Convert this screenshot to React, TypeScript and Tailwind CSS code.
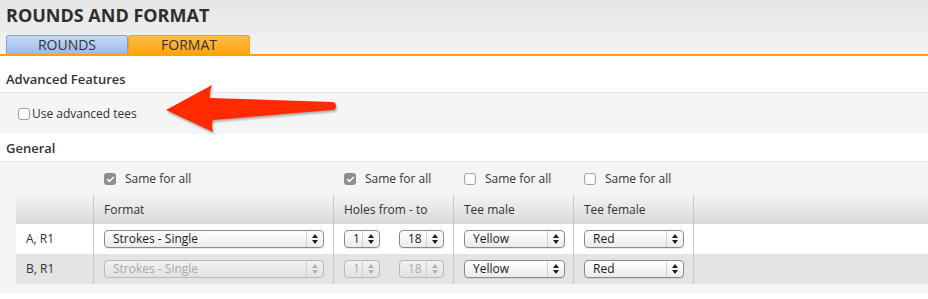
import { Check } from 'lucide-react';

const cols = 'grid grid-cols-[78px_240px_120px_120px_120px_1fr]';

function Arrows({ disabled }: { disabled?: boolean }) {
  return (
    <svg width="6" height="10" viewBox="0 0 6 10" className={disabled ? 'fill-[#b0b0b0]' : 'fill-[#1e1e1e]'}>
      <polygon points="0,4 3,0 6,4" />
      <polygon points="0,6 3,10 6,6" />
    </svg>
  );
}

function Select({ value, width, disabled }: { value: string; width: string; disabled?: boolean }) {
  return (
    <div
      className={`flex h-[18px] items-stretch rounded-[4px] border ${width} ${
        disabled
          ? 'border-[#b9b9b9] bg-gradient-to-b from-[#f2f2f2] to-[#e2e2e2] text-[#a9a9a9]'
          : 'border-[#8a8a8a] bg-gradient-to-b from-white to-[#ebebeb] text-[#1b1b1b] shadow-[0_1px_0_rgba(0,0,0,0.08)]'
      }`}
    >
      <span className="flex flex-1 items-center pl-[8px] text-[12px] leading-none">{value}</span>
      <span
        className={`flex w-[17px] items-center justify-center border-l ${
          disabled ? 'border-[#d2d2d2]' : 'border-[#d0d0d0]'
        }`}
      >
        <Arrows disabled={disabled} />
      </span>
    </div>
  );
}

function CheckBox({ checked }: { checked?: boolean }) {
  return checked ? (
    <span className="flex h-[12px] w-[12px] items-center justify-center rounded-[3px] bg-[#8d8d8d]">
      <Check className="h-[9px] w-[9px] text-white" strokeWidth={4} />
    </span>
  ) : (
    <span className="h-[12px] w-[12px] rounded-[3px] border border-[#a0a0a0] bg-white" />
  );
}

function SameForAll({ checked }: { checked?: boolean }) {
  return (
    <div className="flex items-center gap-[9px] pl-[10px] text-[12px] text-[#333]">
      <CheckBox checked={checked} />
      <span>Same for all</span>
    </div>
  );
}

const rows = [
  { label: 'A, R1', disabled: false, bg: 'bg-white' },
  { label: 'B, R1', disabled: true, bg: 'bg-[#e4e4e4]' },
];

export default function App() {
  return (
    <div className="relative h-[299px] w-[928px] overflow-hidden bg-white font-['Open_Sans',sans-serif] text-[#333]">
      {/* header + tabs */}
      <div className="h-[56px] border-b-2 border-[#ffa200] bg-gradient-to-b from-[#e5e5e5] to-[#f3f3f3] px-[6px]">
        <h1 className="pt-[1px] text-[18px] font-bold leading-[28px] text-[#2e2e2e]">
          ROUNDS AND FORMAT
        </h1>
        <div className="mt-[6px] flex">
          <div className="flex h-[19px] w-[122px] items-center justify-center rounded-t-[3px] border border-b-0 border-[#7fa3dc] bg-gradient-to-b from-[#c9dbf6] to-[#9bb8e9] text-[14px] leading-none text-[#333]">
            ROUNDS
          </div>
          <div className="flex h-[19px] w-[122px] items-center justify-center rounded-t-[3px] border border-b-0 border-[#f3a10f] bg-gradient-to-b from-[#ffbd45] to-[#ffa400] text-[14px] leading-none text-[#333]">
            FORMAT
          </div>
        </div>
      </div>

      {/* advanced features */}
      <div className="flex h-[36px] items-end px-[6px] pb-[4px] text-[13px] font-semibold leading-[18px] text-[#333]">
        Advanced Features
      </div>
      <div className="flex h-[42px] items-center gap-[2px] border-t border-[#e6e6e6] bg-[#f5f5f5] pl-[18px] text-[12px] text-[#333]">
        <CheckBox />
        <span>Use advanced tees</span>
      </div>

      {/* general */}
      <div className="flex h-[27px] items-end px-[6px] pb-[4px] text-[13px] font-semibold leading-[18px] text-[#333]">
        General
      </div>
      <div className="h-[133px] border-t border-[#e6e6e6] bg-[#f5f5f5] pl-[16px]">
        <div className={`${cols} h-[33px] items-end pb-[7px]`}>
          <div />
          <SameForAll checked />
          <SameForAll checked />
          <SameForAll />
          <SameForAll />
          <div />
        </div>

        <div className={`${cols} h-[29px] bg-gradient-to-b from-[#f1f3f6] to-[#d9d9d9] text-[12px] text-[#333]`}>
          <div className="border-r border-[#c8c8c8]" />
          <div className="flex items-center border-r border-[#c8c8c8] pl-[10px]">Format</div>
          <div className="flex items-center border-r border-[#c8c8c8] pl-[10px]">Holes from - to</div>
          <div className="flex items-center border-r border-[#c8c8c8] pl-[10px]">Tee male</div>
          <div className="flex items-center border-r border-[#c8c8c8] pl-[10px]">Tee female</div>
          <div />
        </div>

        {rows.map((r) => (
          <div key={r.label} className={`${cols} h-[30px] ${r.bg} text-[12px] text-[#333]`}>
            <div className="flex items-center border-r border-[#c8c8c8] pl-[10px]">{r.label}</div>
            <div className="flex items-center border-r border-[#c8c8c8] pl-[10px]">
              <Select value="Strokes - Single" width="w-[220px]" disabled={r.disabled} />
            </div>
            <div className="flex items-center gap-[19px] border-r border-[#c8c8c8] pl-[10px]">
              <Select value="1" width="w-[36px]" disabled={r.disabled} />
              <Select value="18" width="w-[45px]" disabled={r.disabled} />
            </div>
            <div className="flex items-center border-r border-[#c8c8c8] pl-[10px]">
              <Select value="Yellow" width="w-[101px]" />
            </div>
            <div className="flex items-center border-r border-[#c8c8c8] pl-[10px]">
              <Select value="Red" width="w-[100px]" />
            </div>
            <div />
          </div>
        ))}
      </div>

      {/* annotation arrow */}
      <svg
        className="absolute left-[160px] top-[80px] drop-shadow-[1px_2px_1px_rgba(0,0,0,0.3)]"
        width="180"
        height="60"
        viewBox="0 0 180 60"
      >
        <path
          d="M6,30 L52,5 Q49,12 50,18 L172,22 A4,4 0 0 1 172,30 L53,40 Q51,46 53,52 Z"
          fill="#ff2a00"
        />
      </svg>
    </div>
  );
}
